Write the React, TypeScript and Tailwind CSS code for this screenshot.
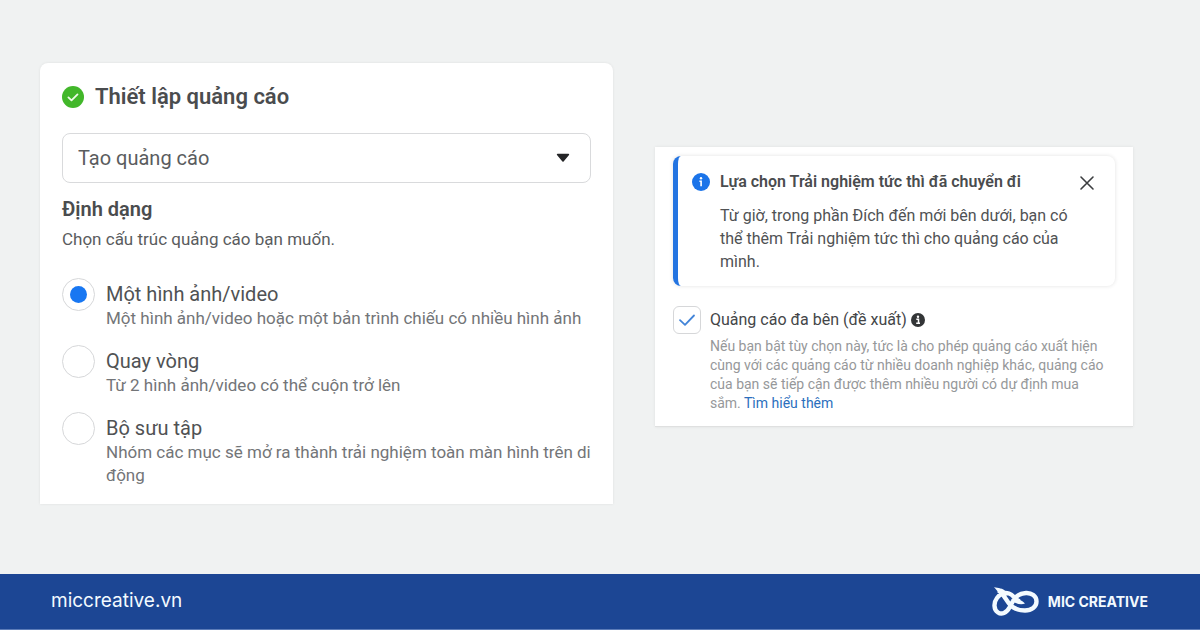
import { useState } from "react";

const formats = [
  {
    id: "single",
    label: "Một hình ảnh/video",
    text: "Một hình ảnh/video hoặc một bản trình chiếu có nhiều hình ảnh",
  },
  {
    id: "carousel",
    label: "Quay vòng",
    text: "Từ 2 hình ảnh/video có thể cuộn trở lên",
  },
  {
    id: "collection",
    label: "Bộ sưu tập",
    text: "Nhóm các mục sẽ mở ra thành trải nghiệm toàn màn hình trên di động",
  },
];

function SetupCard() {
  const [format, setFormat] = useState("single");

  return (
    <section className="rounded-t-lg bg-white px-[22px] pt-5 pb-[17px] shadow-[0_0_3px_rgba(0,0,0,0.08)]">
      <div className="flex items-center gap-[11px]">
        <svg className="size-[22px] shrink-0" viewBox="0 0 22 22" aria-hidden="true">
          <circle cx="11" cy="11" r="11" fill="#42b72a" />
          <path
            d="M6.4 11.4l3.1 3 6-6"
            fill="none"
            stroke="#effbe9"
            strokeWidth="1.8"
            strokeLinecap="round"
            strokeLinejoin="round"
          />
        </svg>
        <h1 className="text-[22px] leading-7 font-semibold text-[#4a4c4e]">Thiết lập quảng cáo</h1>
      </div>

      <div className="relative mt-[22px]">
        <select
          aria-label="Thiết lập quảng cáo"
          className="block h-[50px] w-full appearance-none rounded-lg border border-[#d9dadc] bg-white px-[15px] text-[20px] text-[#5a5c5e]"
        >
          <option>Tạo quảng cáo</option>
        </select>
        <svg
          className="pointer-events-none absolute top-5 right-[21px] h-[10px] w-[14px]"
          viewBox="0 0 14 10"
          aria-hidden="true"
        >
          <path
            d="M1.6 1.6h10.8L7 8z"
            fill="#242527"
            stroke="#242527"
            strokeWidth="1.6"
            strokeLinejoin="round"
          />
        </svg>
      </div>

      <fieldset className="mt-3">
        <legend className="text-[20px] leading-7 font-semibold text-[#4a4c4e]">Định dạng</legend>
        <p className="mt-1 text-[17px] leading-6 text-[#5a5c5e]">Chọn cấu trúc quảng cáo bạn muốn.</p>
        <div className="mt-[27px] flex flex-col gap-[15px]">
          {formats.map((item) => (
            <div key={item.id} className="flex items-start gap-[11px]">
              <input
                type="radio"
                id={item.id}
                name="format"
                checked={format === item.id}
                onChange={() => setFormat(item.id)}
                aria-describedby={item.id + "-text"}
                className="grid size-[33px] shrink-0 appearance-none place-content-center rounded-full border border-[#d6d7d9] bg-white before:size-[17px] before:rounded-full checked:before:bg-[#1877f2]"
              />
              <div className="-mr-2 pt-[3px]">
                <label htmlFor={item.id} className="block text-[20px] leading-[26px] text-[#505254]">
                  {item.label}
                </label>
                <p id={item.id + "-text"} className="text-[17px] leading-[23px] text-[#737578]">
                  {item.text}
                </p>
              </div>
            </div>
          ))}
        </div>
      </fieldset>
    </section>
  );
}

function NoticeCard() {
  const [checked, setChecked] = useState(true);

  return (
    <section className="mt-[84px] border-b border-[#dfe0e0] bg-white px-[18px] pt-[9px] pb-[13px] shadow-[0_0_3px_rgba(0,0,0,0.08)]">
      <div className="flex items-start rounded-lg border-l-[5px] border-[#2374e1] pt-3 pr-5 pb-[13px] pl-[14px] shadow-[0_0_4px_rgba(0,0,0,0.12)]">
        <svg className="mt-[5px] size-[18px] shrink-0" viewBox="0 0 18 18" aria-hidden="true">
          <circle cx="9" cy="9" r="9" fill="#1b74e9" />
          <circle cx="9" cy="5.2" r="1.2" fill="#fff" />
          <path d="M7.4 8.2h1.7v5" fill="none" stroke="#fff" strokeWidth="1.6" />
        </svg>
        <div className="ml-[10px] flex-1">
          <h2 className="text-[16px] leading-7 font-semibold text-[#4a4c4e]">
            Lựa chọn Trải nghiệm tức thì đã chuyển đi
          </h2>
          <p className="mt-2 text-[16px] leading-[23px] text-[#505254]">
            Từ giờ, trong phần Đích đến mới bên dưới, bạn có thể thêm Trải nghiệm tức thì cho quảng cáo của mình.
          </p>
        </div>
        <button type="button" aria-label="Đóng" className="pt-[7px]">
          <svg className="size-4" viewBox="0 0 16 16" aria-hidden="true">
            <path
              d="M2 2l12 12M14 2L2 14"
              fill="none"
              stroke="#3c3e40"
              strokeWidth="1.6"
              strokeLinecap="round"
            />
          </svg>
        </button>
      </div>

      <div className="mt-5 flex items-start gap-[9px]">
        <div className="relative size-7 shrink-0">
          <input
            type="checkbox"
            id="multi"
            checked={checked}
            onChange={(event) => setChecked(event.target.checked)}
            aria-describedby="multi-text"
            className="peer block size-7 appearance-none rounded-md border border-[#d6d7d9] bg-white"
          />
          <svg
            className="pointer-events-none absolute inset-0 hidden size-7 peer-checked:block"
            viewBox="0 0 28 28"
            aria-hidden="true"
          >
            <path
              d="M7 14.2l5 4.6 9-9.3"
              fill="none"
              stroke="#4284d8"
              strokeWidth="1.8"
              strokeLinecap="round"
              strokeLinejoin="round"
            />
          </svg>
        </div>
        <div className="flex-1 pr-2">
          <div className="flex items-center gap-1">
            <label htmlFor="multi" className="text-[16px] leading-7 text-[#444648]">
              Quảng cáo đa bên (đề xuất)
            </label>
            <svg className="size-[14px]" viewBox="0 0 14 14" aria-hidden="true">
              <circle cx="7" cy="7" r="7" fill="#333537" />
              <circle cx="7" cy="3.8" r="1.2" fill="#fff" />
              <path d="M5.3 6.2h2.2v4M5.2 10.2h3.8" fill="none" stroke="#fff" strokeWidth="1.5" />
            </svg>
          </div>
          <p id="multi-text" className="mt-[3px] text-[14px] leading-[19px] text-[#96989a]">
            Nếu bạn bật tùy chọn này, tức là cho phép quảng cáo xuất hiện cùng với các quảng cáo từ nhiều doanh
            nghiệp khác, quảng cáo của bạn sẽ tiếp cận được thêm nhiều người có dự định mua sắm.{" "}
            <a href="#more" className="text-[#2b6fbd]">
              Tìm hiểu thêm
            </a>
          </p>
        </div>
      </div>
    </section>
  );
}

function Logo() {
  return (
    <svg className="h-[29px] w-[47px]" viewBox="0 0 47 29" aria-hidden="true">
      <path
        d="M6 3.5C9 4.500 10.500 7 12.500 10L17 16.500C20.500 21 26 23.500 33 23.500C39.500 23.500 44.500 20 44.500 14.500C44.500 9 39.500 5.700 34 6C27.500 6.300 23.500 9 21 14L17.500 20.500C14.500 26 9.500 28 6 25.500C1.500 22.500 1.500 15.500 5 11C8 7 12.500 5 17 6.500C21.500 8 22.500 12 27.500 14.500"
        fill="none"
        stroke="#f3faff"
        strokeWidth="4.4"
        strokeLinejoin="round"
      />
      <path
        d="M2 0C6 1.500 11 .500 14 5L7.500 9C7 5.500 4.500 3 2 0ZM25 11C27 12.500 30 13.500 33 16.500C29.500 17.800 25 17 21.500 15Z"
        fill="#f3faff"
      />
    </svg>
  );
}

export default function App() {
  return (
    <div className="flex min-h-screen flex-col bg-[#f0f2f2] font-['Roboto',sans-serif]">
      <main className="grid flex-1 grid-cols-[573fr_478fr] items-start gap-[42px] pt-[63px] pr-[67px] pb-10 pl-10">
        <SetupCard />
        <NoticeCard />
      </main>
      <footer className="flex h-14 items-center justify-between border-b border-[#5c7cb8] bg-[#1c4694] pr-[52px] pl-[51px] text-[#f3faff]">
        <a href="#home" className="font-['Inter',sans-serif] text-[19px]">
          miccreative.vn
        </a>
        <div className="flex items-center gap-[9px]">
          <Logo />
          <span className="font-['Inter',sans-serif] text-[14px] font-bold">MIC CREATIVE</span>
        </div>
      </footer>
    </div>
  );
}
